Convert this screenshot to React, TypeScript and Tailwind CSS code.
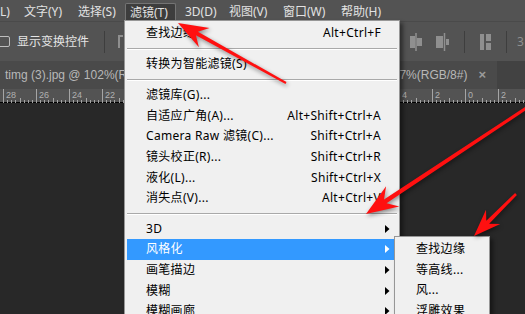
const UI = { fontFamily: '"Noto Sans", "Noto Sans CJK SC", sans-serif' };
const TAB = { fontFamily: '"Liberation Sans", "Noto Sans CJK SC", sans-serif' };

type Item = { t?: string; k?: string; sub?: boolean; active?: boolean; sep?: number };

const menu: Item[] = [
  { t: "查找边缘", k: "Alt+Ctrl+F" },
  { sep: 10.4 },
  { t: "转换为智能滤镜(S)" },
  { sep: 10.4 },
  { t: "滤镜库(G)..." },
  { t: "自适应广角(A)...", k: "Alt+Shift+Ctrl+A" },
  { t: "Camera Raw 滤镜(C)...", k: "Shift+Ctrl+A" },
  { t: "镜头校正(R)...", k: "Shift+Ctrl+R" },
  { t: "液化(L)...", k: "Shift+Ctrl+X" },
  { t: "消失点(V)...", k: "Alt+Ctrl+V" },
  { sep: 10 },
  { t: "3D", sub: true },
  { t: "风格化", sub: true, active: true },
  { t: "画笔描边", sub: true },
  { t: "模糊", sub: true },
  { t: "模糊画廊", sub: true },
];

const stylize = ["查找边缘", "等高线...", "风...", "浮雕效果"];

const bar = [
  { t: "L)", w: "w-[17px]", pl: "pl-0" },
  { t: "文字(Y)", w: "w-[54px]", pl: "pl-[7px]" },
  { t: "选择(S)", w: "w-[54px]", pl: "pl-[7px]" },
  { t: "滤镜(T)", w: "w-[51px]", pl: "pl-[4px]", on: true },
  { t: "3D(D)", w: "w-[46px]", pl: "pl-[9px]" },
  { t: "视图(V)", w: "w-[54px]", pl: "pl-[7px]" },
  { t: "窗口(W)", w: "w-[58px]", pl: "pl-[7px]" },
  { t: "帮助(H)", w: "w-[56px]", pl: "pl-[7px]" },
];

function arrow(tx: number, ty: number, sx: number, sy: number, hl: number, hw: number, w0: number, w1: number) {
  const dx = tx - sx;
  const dy = ty - sy;
  const len = Math.hypot(dx, dy);
  const ux = dx / len;
  const uy = dy / len;
  const nx = -uy;
  const ny = ux;
  const bx = tx - ux * hl;
  const by = ty - uy * hl;
  const cx = tx - ux * hl * 0.72;
  const cy = ty - uy * hl * 0.72;
  const p = [
    [tx, ty],
    [bx + nx * hw, by + ny * hw],
    [cx + (nx * w0) / 2, cy + (ny * w0) / 2],
    [sx + (nx * w1) / 2, sy + (ny * w1) / 2],
    [sx - (nx * w1) / 2, sy - (ny * w1) / 2],
    [cx - (nx * w0) / 2, cy - (ny * w0) / 2],
    [bx - nx * hw, by - ny * hw],
  ];
  return p.map((q) => q.map((v) => v.toFixed(1)).join(",")).join(" ");
}

function Ruler() {
  const ticks = [];
  for (let k = 0; k < 17; k++) {
    const x = 3 + k * 33;
    const n = 28 - 2 * k;
    ticks.push(<line key={"m" + k} x1={x + 0.5} y1={0} x2={x + 0.5} y2={14} stroke="#a5a5a5" />);
    ticks.push(
      <text key={"t" + k} x={x + 3} y={9} fontSize="9" fill="#b0b0b0" fontFamily="Liberation Sans, sans-serif">
        {Math.abs(n)}
      </text>
    );
    for (let j = 1; j < 8; j++) {
      const mx = Math.round(x + j * 4.125) + 0.5;
      ticks.push(<line key={k + "-" + j} x1={mx} y1={j === 4 ? 9 : 11} x2={mx} y2={14} stroke="#a5a5a5" />);
    }
  }
  return (
    <svg width="525" height="14" className="block">
      {ticks}
    </svg>
  );
}

function SubArrow({ white }: { white?: boolean }) {
  return (
    <svg width="5" height="8" className="mr-[7px] ml-auto shrink-0">
      <polygon points="0,0 4.5,4 0,8" fill={white ? "#ffffff" : "#000000"} />
    </svg>
  );
}

export default function App() {
  return (
    <div className="relative flex h-[314px] w-[525px] flex-col overflow-hidden bg-[#282828] text-[12px]" style={UI}>
      {/* menu bar */}
      <div className="flex h-[21px] shrink-0 items-end bg-[#535353] text-[#e2e2e2]">
        {bar.map((b) => (
          <div
            key={b.t}
            className={`flex h-[18px] shrink-0 items-center ${b.w} ${b.pl} ${
              b.on ? "rounded-t-[2px] border border-b-0 border-[#747474] bg-[#3d3d3d]" : ""
            }`}
          >
            <span className="leading-none">{b.t}</span>
          </div>
        ))}
      </div>

      {/* options bar */}
      <div className="flex h-[40px] shrink-0 items-center border-t border-[#4a4a4a] bg-[#535353]">
        <div className="ml-[-3px] h-[11px] w-[13px] rounded-[2px] border border-[#bdbdbd]" />
        <span className="ml-[7px] text-[12px] text-[#e4e4e4]">显示变换控件</span>
        <div className="ml-[15px] h-[22px] w-px bg-[#3e3e3e]" />
        <div className="ml-[13px] h-[13px] w-[5px] border-t-2 border-l-2 border-[#8f8f8f]" />
        <div className="ml-auto flex items-center">
          <svg width="14" height="18" className="mr-[13px]">
            <line x1="7" y1="0" x2="7" y2="18" stroke="#8f8f8f" strokeWidth="1.5" />
            <rect x="1" y="3" width="5" height="12" fill="#8f8f8f" />
            <rect x="8" y="5" width="5" height="8" fill="#8f8f8f" />
          </svg>
          <svg width="14" height="18" className="mr-[14px]">
            <rect x="0" y="3" width="7" height="12" fill="#8f8f8f" />
            <line x1="8.5" y1="0" x2="8.5" y2="18" stroke="#8f8f8f" strokeWidth="1.5" />
            <rect x="10" y="6" width="3" height="6" fill="#8f8f8f" />
          </svg>
          <div className="mr-[15px] h-[22px] w-px bg-[#3e3e3e]" />
          <svg width="12" height="18" className="mr-[14px]">
            <rect x="0" y="1" width="4" height="16" fill="#8f8f8f" />
            <rect x="6" y="1" width="5" height="7" fill="#8f8f8f" />
            <rect x="6" y="10" width="5" height="7" fill="#8f8f8f" />
          </svg>
          <div className="mr-[10px] h-[22px] w-px bg-[#3e3e3e]" />
          <span className="w-[8px] overflow-hidden text-[12px] text-[#8f8f8f]">3</span>
        </div>
      </div>

      {/* document tabs */}
      <div className="flex h-[28px] shrink-0 items-stretch bg-[#424242]" style={TAB}>
        <div className="flex w-[497px] items-center bg-[#4a4a4a] pl-[5px] text-[12px] text-[#b8b8b8]">
          <span className="whitespace-nowrap">timg (3).jpg @ 102%(RGB/8#)</span>
          <span className="ml-auto whitespace-nowrap">.7%(RGB/8#)</span>
          <span className="mr-[11px] ml-[11px] text-[13px] font-bold text-[#9a9a9a]">×</span>
        </div>
      </div>

      {/* ruler */}
      <div className="h-[14px] shrink-0 border-b border-black bg-[#535353]">
        <Ruler />
      </div>

      <div className="flex-1 bg-[#282828]" />

      {/* filter menu */}
      <div className="absolute top-[20px] left-[124px] w-[276px] border border-[#979797] bg-[#f0f0f0] p-[2px] tracking-[0.3px] text-black shadow-[3px_3px_4px_rgba(0,0,0,0.45)]">
        {menu.map((m, i) =>
          m.sep ? (
            <div key={i} className="pt-[4px]" style={{ height: m.sep }}>
              <div className="h-px bg-[#a9a9a9]" />
              <div className="h-px bg-white" />
            </div>
          ) : (
            <div
              key={i}
              className={`flex h-[20.6px] items-center pl-[19px] ${m.active ? "bg-[#3399ff] text-white" : ""}`}
            >
              <span className="whitespace-nowrap leading-none">{m.t}</span>
              {m.k && <span className="mr-[16px] ml-auto whitespace-nowrap leading-none">{m.k}</span>}
              {m.sub && <SubArrow white={m.active} />}
            </div>
          )
        )}
      </div>

      {/* stylize submenu */}
      <div className="absolute top-[236px] left-[394px] w-[96px] border border-[#979797] bg-[#f0f0f0] p-[2px] tracking-[0.3px] text-black shadow-[3px_3px_4px_rgba(0,0,0,0.45)]">
        {stylize.map((s) => (
          <div key={s} className="flex h-[20.6px] items-center pl-[19px]">
            <span className="whitespace-nowrap leading-none">{s}</span>
          </div>
        ))}
      </div>

      {/* annotation arrows */}
      <svg width="525" height="314" className="pointer-events-none absolute top-0 left-0 drop-shadow-[1px_2px_2px_rgba(0,0,0,0.45)]">
        <polygon points={arrow(178, 23, 286, 83, 30, 11, 4, 2)} fill="#ff1010" />
        <polygon points={arrow(366, 214, 540, 99, 32, 12, 4.5, 3)} fill="#ff1010" />
        <polygon points={arrow(474, 236, 516, 194, 27, 10, 4, 2.5)} fill="#ff1010" />
      </svg>
    </div>
  );
}
